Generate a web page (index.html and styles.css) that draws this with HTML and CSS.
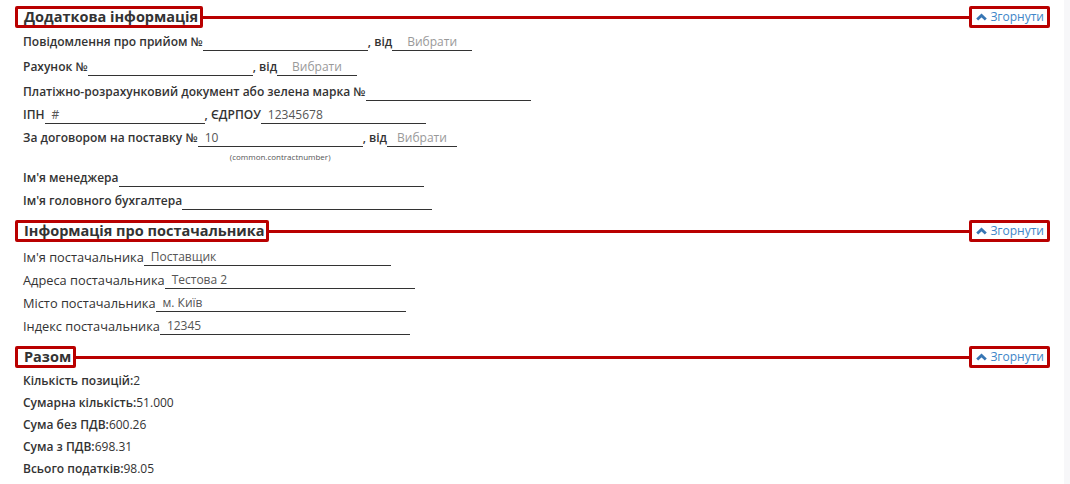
FILE: index.html
```html
<!DOCTYPE html>
<html lang="uk">
<head>
<meta charset="utf-8">
<title>Форма</title>
<link rel="stylesheet" href="styles.css">
</head>
<body>
<div class="page">
  <section class="section s1">
    <div class="sec-head">
      <h2 class="sec-title">Додаткова інформація</h2>
      <div class="sec-line"></div>
      <button class="collapse"><svg class="chev" viewBox="0 0 11 8" width="11" height="8"><path d="M1.2 6.6 L5.5 2.4 L9.8 6.6" fill="none" stroke="#3776b4" stroke-width="2.8"/></svg>Згорнути</button>
    </div>
    <div class="row r1"><span class="lbl">Повідомлення про прийом №</span><span class="field w165"></span><span class="lbl">, від</span><span class="field w80 ph">Вибрати</span></div>
    <div class="row r2"><span class="lbl">Рахунок №</span><span class="field w165"></span><span class="lbl">, від</span><span class="field w80 ph">Вибрати</span></div>
    <div class="row r3"><span class="lbl">Платіжно-розрахунковий документ або зелена марка №</span><span class="field w165"></span></div>
    <div class="row r4"><span class="lbl">ІПН</span><span class="field w160">#</span><span class="lbl">, ЄДРПОУ</span><span class="field w165">12345678</span></div>
    <div class="row r5"><span class="lbl">За договором на поставку №</span><span class="fwrap"><span class="field w165">10</span><span class="hint">(common.contractnumber)</span></span><span class="lbl">, від</span><span class="field w70 ph ph2">Вибрати</span></div>
    <div class="row r6"><span class="lbl">Ім'я менеджера</span><span class="field w305"></span></div>
    <div class="row r7"><span class="lbl">Ім'я головного бухгалтера</span><span class="field w250"></span></div>
  </section>

  <section class="section s2">
    <div class="sec-head">
      <h2 class="sec-title">Інформація про постачальника</h2>
      <div class="sec-line"></div>
      <button class="collapse"><svg class="chev" viewBox="0 0 11 8" width="11" height="8"><path d="M1.2 6.6 L5.5 2.4 L9.8 6.6" fill="none" stroke="#3776b4" stroke-width="2.8"/></svg>Згорнути</button>
    </div>
    <div class="row rs"><span class="lbl2">Ім'я постачальника</span><span class="field w247">Поставщик</span></div>
    <div class="row rs"><span class="lbl2">Адреса постачальника</span><span class="field w250">Тестова 2</span></div>
    <div class="row rs"><span class="lbl2">Місто постачальника</span><span class="field w250">м. Київ</span></div>
    <div class="row rs"><span class="lbl2">Індекс постачальника</span><span class="field w250">12345</span></div>
  </section>

  <section class="section s3">
    <div class="sec-head">
      <h2 class="sec-title">Разом</h2>
      <div class="sec-line"></div>
      <button class="collapse"><svg class="chev" viewBox="0 0 11 8" width="11" height="8"><path d="M1.2 6.6 L5.5 2.4 L9.8 6.6" fill="none" stroke="#3776b4" stroke-width="2.8"/></svg>Згорнути</button>
    </div>
    <div class="row tot"><span class="lbl">Кількість позицій:</span><span class="val">2</span></div>
    <div class="row tot"><span class="lbl">Сумарна кількість:</span><span class="val">51.000</span></div>
    <div class="row tot"><span class="lbl">Сума без ПДВ:</span><span class="val">600.26</span></div>
    <div class="row tot"><span class="lbl">Сума з ПДВ:</span><span class="val">698.31</span></div>
    <div class="row tot"><span class="lbl">Всього податків:</span><span class="val">98.05</span></div>
  </section>
</div>
</body>
</html>
```

FILE: styles.css
```css
html, body {
  margin: 0;
  padding: 0;
  background: #f7f7f9;
}
body {
  font-family: "Open Sans", "Liberation Sans", sans-serif;
  font-size: 12px;
  color: #333;
}
.page {
  width: 1064px;
  height: 484px;
  background: #fff;
  box-sizing: border-box;
  padding: 6px 14px 0 15px;
  overflow: hidden;
}
.sec-head {
  display: flex;
  align-items: center;
  height: 22px;
}
.sec-title {
  margin: 0;
  font-size: 14.5px;
  font-weight: 700;
  line-height: 16px;
  color: #333;
  border: 3px solid #b90000;
  border-radius: 2px;
  padding: 0 2px 0 6px;
  white-space: nowrap;
}
.sec-line {
  flex: 1;
  height: 3px;
  background: #b90000;
}
.collapse {
  display: flex;
  align-items: center;
  gap: 3px;
  font-family: inherit;
  font-size: 12px;
  line-height: 16px;
  color: #4086c8;
  background: #fff;
  border: 3px solid #b90000;
  border-radius: 2px;
  padding: 0 3px 0 4px;
  margin: 0;
  cursor: pointer;
}
.chev { display: block; }
.row {
  display: flex;
  align-items: flex-end;
  padding-left: 8px;
  white-space: nowrap;
}
.lbl, .lbl2, .val {
  line-height: 18px;
  height: 18px;
}
.lbl { font-weight: 600; color: #333; }
.lbl2 { font-size: 12.8px; font-weight: 400; color: #333; }
.val { color: #333; }
.field {
  display: block;
  box-sizing: border-box;
  border-bottom: 1px solid #333;
  line-height: 17px;
  height: 18px;
  padding: 0 7px;
  color: #555;
}
.field.ph { color: #999; padding-left: 15px; }
.field.ph2 { padding-left: 10px; }
.fwrap {
  display: flex;
  flex-direction: column;
  align-items: center;
  align-self: flex-start;
}
.hint {
  font-size: 8px;
  line-height: 12px;
  color: #555;
  margin-top: 4px;
}
.r5 { align-items: flex-start; }
.w70 { width: 70px; }
.w80 { width: 80px; }
.w160 { width: 160px; }
.w165 { width: 165px; }
.w247 { width: 247px; }
.w250 { width: 250px; }
.w305 { width: 305px; }

.s1 .r1 { margin-top: 5px; }
.s1 .r1, .s1 .r2 { margin-bottom: 7px; }
.s1 .r3, .s1 .r4 { margin-bottom: 5px; }
.s1 .r5 { margin-bottom: 6px; }
.s1 .r6 { margin-bottom: 5px; }

.s2 { margin-top: 10px; }
.s2 .rs { margin-bottom: 5px; }
.s2 .rs:nth-child(2) { margin-top: 6px; }

.s3 { margin-top: 11px; }
.tot .lbl, .tot .val { line-height: 22px; height: 22px; }
.s3 .tot:nth-child(2) { margin-top: 2px; }
```
